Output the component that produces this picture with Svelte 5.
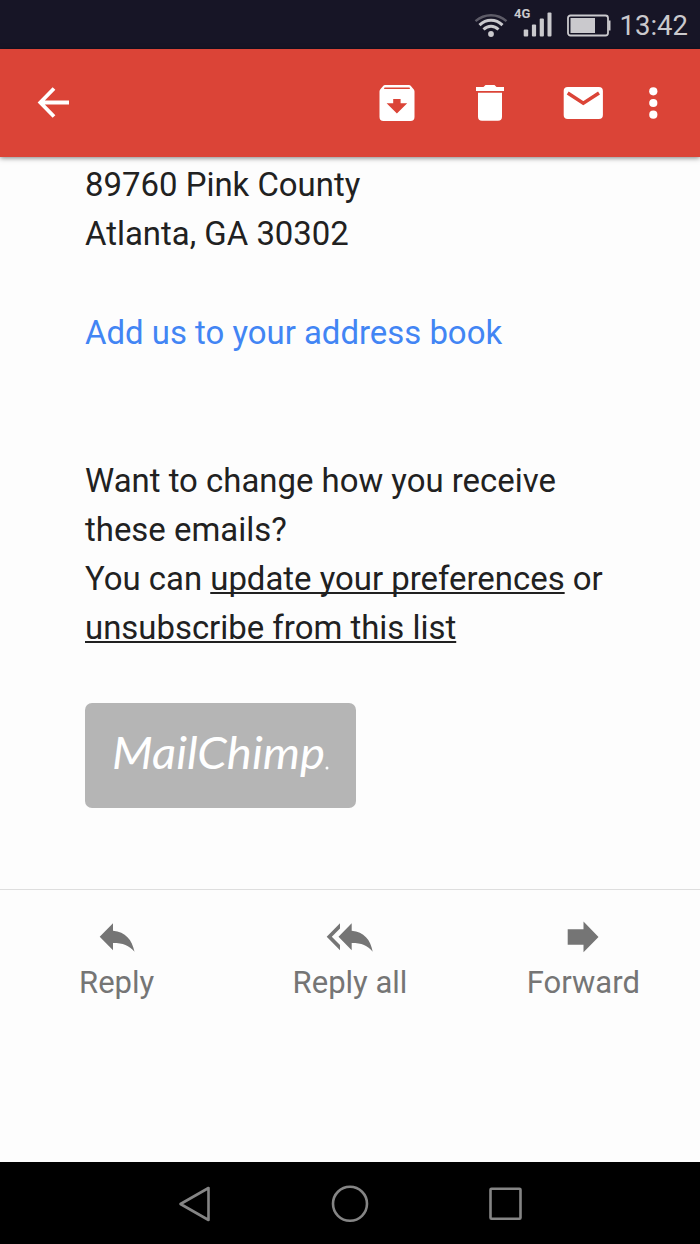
<script lang="ts">
	let time = '13:42';

	const address = ['89760 Pink County', 'Atlanta, GA 30302'];

	const actions = [
		{ id: 'reply', label: 'Reply' },
		{ id: 'reply-all', label: 'Reply all' },
		{ id: 'forward', label: 'Forward' }
	];
</script>

<div class="screen">
	<div class="status">
		<svg class="wifi" width="34" height="26" viewBox="0 0 34 26" fill="none" stroke="#cac9cd">
			<path d="M1.500 8.200C10.500 0.300 23.500 0.300 32.500 8.200" stroke="#5d5b67" stroke-width="2.400" />
			<path d="M5.500 12.200C12.300 5.700 21.700 5.700 28.500 12.200" stroke-width="3" />
			<path d="M9.500 16.500C14 12.300 20 12.300 24.500 16.500" stroke-width="3" />
			<circle cx="17" cy="21" r="2.900" fill="#cac9cd" stroke="none" />
		</svg>
		<div class="signal">
			<span class="net">4G</span>
			<svg width="29" height="25" viewBox="0 0 29 25" fill="#cac9cd">
				<rect x="0.700" y="16.500" width="4.500" height="7" rx="1" />
				<rect x="8.900" y="11.500" width="4.200" height="12" rx="1" />
				<rect x="16.700" y="5.500" width="4.200" height="18" rx="1" />
				<rect x="24.500" y="-0.500" width="4" height="24" rx="1" />
			</svg>
		</div>
		<svg class="battery" width="44" height="24" viewBox="0 0 44 24" fill="none">
			<rect x="1" y="1.500" width="40" height="20" rx="2.500" stroke="#cac9cd" stroke-width="1.800" />
			<rect x="3.500" y="4" width="24.500" height="15" fill="#cac9cd" />
			<path d="M41.500 6.500h2v10h-2z" fill="#cac9cd" />
		</svg>
		<span class="time">{time}</span>
	</div>

	<header>
		<button class="back" aria-label="Back">
			<svg width="34" height="32" viewBox="0 0 34 32" fill="none" stroke="#fff" stroke-width="3.800">
				<path d="M33 15.500H4.500M18 1.500L4.300 15.500l13.700 14" />
			</svg>
		</button>
		<button class="archive" aria-label="Archive">
			<svg width="36" height="36" viewBox="0 0 36 36">
				<path
					d="M6 0h24q1 0 1.700.8L34.800 4.500q.7.800.7 2V32a4 4 0 0 1-4 4h-27a4 4 0 0 1-4-4V6.500q0-1.200.7-2L4.300.8Q5 0 6 0z"
					fill="#fff"
				/>
				<path d="M5.500 2.500h25l.5 1.500H5zM14.200 14h7.400v4.200h6.600L17.900 28.500 7.600 18.200h6.600z" fill="#db4437" />
			</svg>
		</button>
		<button class="trash" aria-label="Delete">
			<svg width="28" height="36" viewBox="0 0 28 36" fill="#fff">
				<path d="M0 2h7.500L9.500 0h9l2 2H28v4H0zM2 7.700h24v24a4 4 0 0 1-4 4H6a4 4 0 0 1-4-4z" />
			</svg>
		</button>
		<button class="unread" aria-label="Mark unread">
			<svg width="40" height="32" viewBox="0 0 40 32">
				<rect x="0.700" y="0" width="39.200" height="32" rx="4" fill="#fff" />
				<path d="M4.700 6L20.300 16.200 36 6" fill="none" stroke="#db4437" stroke-width="3.500" />
			</svg>
		</button>
		<button class="more" aria-label="More options">
			<svg width="9" height="32" viewBox="0 0 9 32" fill="#fff">
				<circle cx="4.300" cy="4.300" r="4.100" />
				<circle cx="4.300" cy="16" r="4.100" />
				<circle cx="4.300" cy="27.700" r="4.100" />
			</svg>
		</button>
	</header>

	<main>
		<div class="message">
			<p>
				{#each address as line}
					{line}<br />
				{/each}
			</p>
			<p class="book"><a href="#book">Add us to your address book</a></p>
			<p class="prefs">
				Want to change how you receive<br />
				these emails?<br />
				You can <a href="#prefs">update your preferences</a> or<br />
				<a href="#unsubscribe">unsubscribe from this list</a>
			</p>
			<div class="badge">
				<svg width="271" height="105" viewBox="0 0 271 105" fill="#fff">
					<text x="27" y="66" textLength="213" lengthAdjust="spacingAndGlyphs">MailChimp</text>
					<circle cx="242" cy="65" r="1.500" />
				</svg>
			</div>
		</div>

		<div class="actions">
			{#each actions as action (action.id)}
				<button class="action">
					{#if action.id === 'reply'}
						<svg width="36" height="32" viewBox="0 0 36 32">
							<path d="M0.700 15.700L14 2.300v7.400C26.500 11 33 18.500 35.500 30.700 30 24.500 24 22 14 22v7.300z" />
						</svg>
					{:else if action.id === 'reply-all'}
						<svg width="47" height="32" viewBox="0 0 47 32">
							<path d="M14 2.300v5.200L5.800 15.700l8.200 8.200v5.400L0.700 15.700z" />
							<path d="M12.500 15.700L25.700 2.300v7.400C38 11 44.500 18.500 46.700 30.700 41.500 24.500 35.700 22 25.700 22v7.300z" />
						</svg>
					{:else}
						<svg width="32" height="32" viewBox="0 0 32 32">
							<path d="M0.700 8.200h15.800V0.500L31.500 15.900 16.500 31.300v-7.500H0.700z" />
						</svg>
					{/if}
					<span>{action.label}</span>
				</button>
			{/each}
		</div>
	</main>

	<nav>
		<svg width="32" height="36" viewBox="0 0 32 36">
			<path d="M29.500 2v32L1.500 18z" />
		</svg>
		<svg width="38" height="38" viewBox="0 0 38 38">
			<circle cx="19" cy="18.800" r="17" />
		</svg>
		<svg width="34" height="34" viewBox="0 0 34 34">
			<rect x="2.500" y="1.800" width="30" height="30" rx="1" />
		</svg>
	</nav>
</div>

<style>
	:global(body) {
		margin: 0;
		background: #fdfdfd;
	}
	.screen {
		width: 700px;
		height: 1244px;
		display: flex;
		flex-direction: column;
		overflow: hidden;
		font-family: Roboto, 'Liberation Sans', sans-serif;
		color: #212121;
		background: #fdfdfd;
	}
	svg {
		display: block;
		overflow: visible;
	}
	button {
		border: 0;
		padding: 0;
		background: transparent;
		font: inherit;
		cursor: pointer;
	}
	.status {
		flex: none;
		box-sizing: border-box;
		height: 49px;
		display: flex;
		align-items: center;
		padding: 2px 12px 0 474px;
		background: #171526;
		color: #cac9cd;
	}
	.signal {
		position: relative;
		margin-left: 15px;
	}
	.net {
		position: absolute;
		left: -9px;
		top: -6px;
		font-size: 13px;
		line-height: 14px;
		font-weight: 700;
	}
	.battery {
		margin-left: 15px;
	}
	.time {
		margin-left: auto;
		font-size: 27.500px;
		line-height: 32px;
	}
	header {
		flex: none;
		position: relative;
		z-index: 1;
		height: 108px;
		display: flex;
		align-items: center;
		padding-left: 36px;
		background: #db4437;
		box-shadow: 0 1px 5px rgba(0, 0, 0, 0.5);
	}
	.archive {
		margin-left: 309px;
	}
	.trash {
		margin-left: 61px;
	}
	.unread {
		margin-left: 59px;
	}
	.more {
		margin-left: 46px;
	}
	main {
		flex: 1;
		display: flex;
		flex-direction: column;
	}
	.message {
		height: 732px;
		box-sizing: border-box;
		padding: 3px 85px 0;
		font-size: 32.920px;
		line-height: 49.250px;
		white-space: nowrap;
	}
	p {
		margin: 0;
	}
	.book {
		margin-top: 49.250px;
	}
	.book a {
		color: #4285f4;
		text-decoration: none;
	}
	.prefs {
		margin-top: 98.500px;
	}
	.prefs a {
		color: inherit;
		text-decoration: underline;
		text-decoration-thickness: 1.500px;
		text-decoration-skip-ink: none;
		text-underline-offset: 2px;
	}
	.badge {
		width: 271px;
		height: 105px;
		margin-top: 50.500px;
		border-radius: 7px;
		background: #b5b5b5;
	}
	.badge text {
		font-family: Lato, sans-serif;
		font-size: 45px;
		font-style: italic;
	}
	.actions {
		display: flex;
		border-top: 1px solid #dedede;
		padding-top: 31px;
	}
	.action {
		flex: 1;
		display: flex;
		flex-direction: column;
		align-items: center;
		color: #757575;
		font-size: 31px;
		line-height: 40px;
	}
	.action svg {
		fill: #757575;
	}
	.action span {
		margin-top: 10px;
	}
	nav {
		flex: none;
		box-sizing: border-box;
		height: 82px;
		display: flex;
		align-items: center;
		justify-content: space-between;
		padding: 2px 178px 0 179px;
		background: #000;
	}
	nav svg {
		fill: none;
		stroke: #858585;
		stroke-width: 2.600;
		stroke-linejoin: round;
	}
</style>
